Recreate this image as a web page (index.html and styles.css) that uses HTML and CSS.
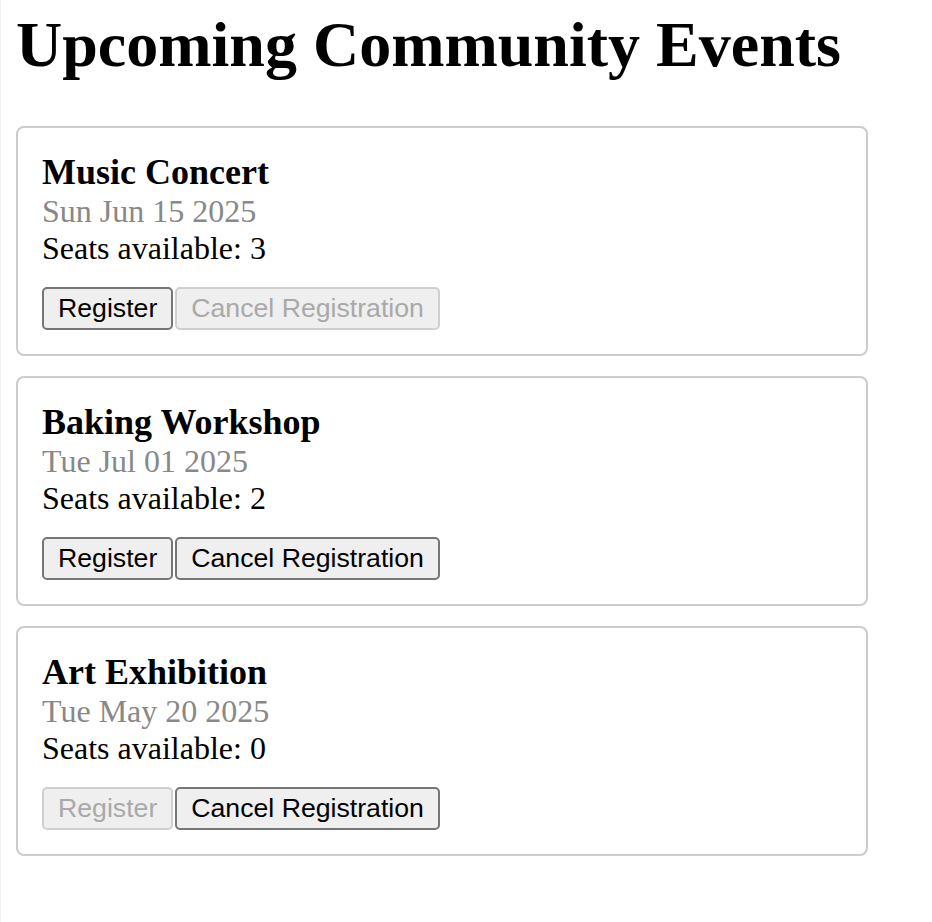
FILE: index.html
```html
<!DOCTYPE html>
<html lang="en">
<head>
<meta charset="utf-8">
<title>Upcoming Community Events</title>
<link rel="stylesheet" href="styles.css">
</head>
<body>
  <h1 class="page-title">Upcoming Community Events</h1>
  <div class="event-list">
    <div class="event-card">
      <h3 class="event-title">Music Concert</h3>
      <p class="event-date">Sun Jun 15 2025</p>
      <p class="event-seats">Seats available: 3</p>
      <div class="event-actions">
        <button class="btn">Register</button><button class="btn" disabled>Cancel Registration</button>
      </div>
    </div>
    <div class="event-card">
      <h3 class="event-title">Baking Workshop</h3>
      <p class="event-date">Tue Jul 01 2025</p>
      <p class="event-seats">Seats available: 2</p>
      <div class="event-actions">
        <button class="btn">Register</button><button class="btn">Cancel Registration</button>
      </div>
    </div>
    <div class="event-card">
      <h3 class="event-title">Art Exhibition</h3>
      <p class="event-date">Tue May 20 2025</p>
      <p class="event-seats">Seats available: 0</p>
      <div class="event-actions">
        <button class="btn" disabled>Register</button><button class="btn">Cancel Registration</button>
      </div>
    </div>
  </div>
</body>
</html>
```

FILE: styles.css
```css
html {
  min-height: 100%;
  border-left: 1px solid #f0f0f0;
  background: #fff;
}

body {
  margin: 0 0 0 15px;
  font-family: "Liberation Serif", "Times New Roman", serif;
  font-size: 32px;
  color: #000;
}

.page-title {
  margin: 8px 0 44px;
  font-size: 64px;
  line-height: 74px;
  font-weight: bold;
}

.event-list {
  display: flex;
  flex-direction: column;
  gap: 20px;
}

.event-card {
  max-width: 800px;
  padding: 24px;
  border: 2px solid #cccccc;
  border-radius: 8px;
}

.event-title {
  margin: 0;
  font-size: 36px;
  line-height: 41px;
  font-weight: bold;
}

.event-date {
  margin: 0;
  color: #888888;
  line-height: 37px;
}

.event-seats {
  margin: 0;
  line-height: 37px;
}

.event-actions {
  display: flex;
  gap: 2px;
  margin-top: 20px;
}

.btn {
  font-family: "Liberation Sans", Arial, sans-serif;
  font-size: 26.67px;
  line-height: 31px;
  padding: 4px 14px;
  color: #000;
  background: #efefef;
  border: 2px solid #767676;
  border-radius: 5px;
}

.btn:disabled {
  color: #a9a9a9;
  border-color: #cfcfcf;
  background: #efefef;
}
```
